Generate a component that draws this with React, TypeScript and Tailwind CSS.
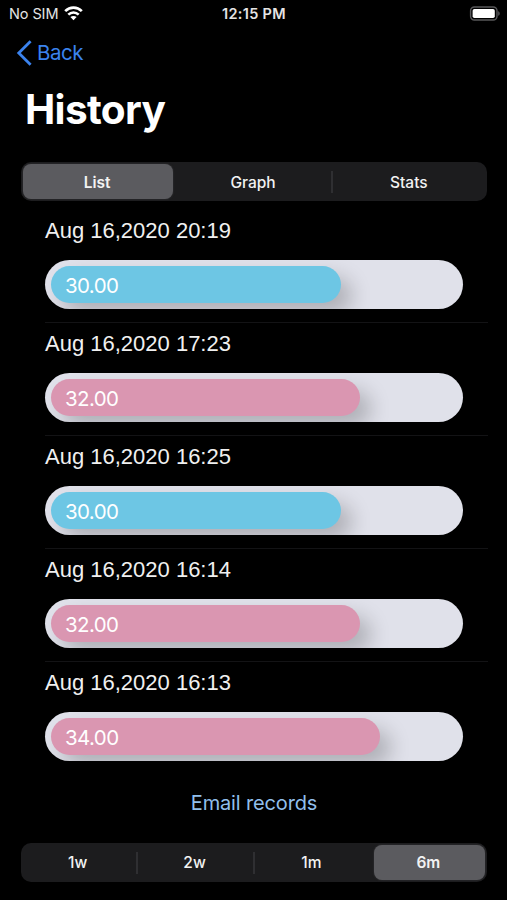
import React, { useState } from 'react';
import clsx from 'clsx';

interface HistoryRecord {
  id: number;
  date: string;
  value: number;
}

const records: HistoryRecord[] = [
  { id: 1, date: 'Aug 16,2020 20:19', value: 30 },
  { id: 2, date: 'Aug 16,2020 17:23', value: 32 },
  { id: 3, date: 'Aug 16,2020 16:25', value: 30 },
  { id: 4, date: 'Aug 16,2020 16:14', value: 32 },
  { id: 5, date: 'Aug 16,2020 16:13', value: 34 },
];

// Bar length in px for one unit of value
const UNIT_WIDTH = 9.67;

const StatusBar: React.FC = () => (
  <div className="grid h-7 grid-cols-3 items-center pl-[9px] pr-[7px] text-[14.5px] text-[#e4e4e4]">
    <div className="flex items-center gap-[6px] pb-[1px]">
      <span className="tracking-[-0.1px]">No SIM</span>
      <svg className="mt-[-1px] h-[15px] w-[19px]" viewBox="0 0 19 15" fill="none" stroke="#fff">
        <path d="M1.2 5.1C5.9 0.4 13.1 0.4 17.8 5.1" strokeWidth="2.7" />
        <path d="M4.3 8.6C7.3 5.7 11.7 5.7 14.7 8.6" strokeWidth="2.6" />
        <path d="M9.5 14.2L6.4 11.1C8.3 9.6 10.7 9.6 12.6 11.1Z" fill="#fff" stroke="none" />
      </svg>
    </div>
    <span className="pb-[1px] pr-[1px] text-center font-semibold tracking-[0.3px]">12:15 PM</span>
    <svg className="mt-[-1px] h-[15px] w-[31px] justify-self-end" viewBox="0 0 31 15">
      <rect x="1.6" y="1" width="26.4" height="13" rx="3.8" fill="none" stroke="#58585a" strokeWidth="1.4" />
      <rect x="3.6" y="3" width="22.2" height="9" rx="1.8" fill="#fff" />
      <path d="M29.2 5.2C31.2 5.9 31.2 9.1 29.2 9.8Z" fill="#58585a" />
    </svg>
  </div>
);

interface SegmentedControlProps {
  items: string[];
  selected: string;
  onSelect: (item: string) => void;
}

const SegmentedControl: React.FC<SegmentedControlProps> = ({ items, selected, onSelect }) => {
  const selectedIndex = items.indexOf(selected);

  return (
    <div className="flex h-[39px] rounded-[10px] bg-[#1c1c1e] p-[2px]">
      {items.map((item, index) => (
        <React.Fragment key={item}>
          {index > 0 && (
            <div
              className={clsx(
                'ml-[2px] mr-[1.5px] h-[22px] w-[2px] self-center',
                index === selectedIndex || index - 1 === selectedIndex ? 'bg-transparent' : 'bg-[#2f2f32]'
              )}
            />
          )}
          <button
            onClick={() => onSelect(item)}
            className={clsx(
              'min-w-0 flex-1 basis-0 rounded-[8px] pr-[2px] text-[15.5px] text-[#f2f2f2]',
              items.length === 3 ? 'pt-[2px]' : 'pt-[1px]',
              item === selected ? 'bg-[#5b5b5f] font-semibold shadow-[0_0_2px_#3a3a3d]' : 'font-medium'
            )}
          >
            {item}
          </button>
        </React.Fragment>
      ))}
    </div>
  );
};

const RecordRow: React.FC<{ record: HistoryRecord; last: boolean }> = ({ record, last }) => (
  <li
    className={clsx(
      'h-[113px] border-b pr-[25px] pt-[4px]',
      last ? 'border-transparent' : 'border-[#131315]'
    )}
  >
    <div className="h-[46px] whitespace-nowrap font-['Liberation_Sans',Arial,sans-serif] text-[22px] leading-[33px] text-[#f0f0f0]">
      {record.date}
    </div>
    <div className="h-[49px] overflow-hidden rounded-full bg-[#e0e1ea] p-[6px]">
      <div
        className={clsx(
          'flex h-[37px] items-center rounded-full pl-[14px] pt-[3px] text-[20.5px] tracking-[-0.6px] text-white shadow-[11px_11px_20px_rgba(0,0,0,0.22)]',
          record.value > 30 ? 'bg-[#da96b1]' : 'bg-[#6dc6e4]'
        )}
        style={{ width: record.value * UNIT_WIDTH }}
      >
        {record.value.toFixed(2)}
      </div>
    </div>
  </li>
);

export default function App() {
  const [tab, setTab] = useState('List');
  const [range, setRange] = useState('6m');

  return (
    <div className="h-[900px] w-[507px] overflow-hidden bg-black font-[Inter,sans-serif] text-white">
      <StatusBar />

      <header>
        <button className="flex h-[49px] items-center gap-[5px] pl-[16px] text-[20.5px] tracking-[-0.5px] text-[#3b83ee]">
          <svg className="h-[26px] w-[16px]" viewBox="0 0 16 26" fill="none" stroke="currentColor" strokeWidth="2.8">
            <path d="M14.6 1.3L2.8 13L14.6 24.7" />
          </svg>
          <span className="pt-[1px]">Back</span>
        </button>
        <h1 className="h-[85px] pl-[25px] pt-[8px] text-[40.5px] font-bold leading-[50px] tracking-[-0.65px]">
          History
        </h1>
      </header>

      <div className="pl-[21px] pr-[20px]">
        <SegmentedControl items={['List', 'Graph', 'Stats']} selected={tab} onSelect={setTab} />
      </div>

      <ul className="mt-[9px] pl-[45px] pr-[19px]">
        {records.map((record, index) => (
          <RecordRow key={record.id} record={record} last={index === records.length - 1} />
        ))}
      </ul>

      <button className="block h-[56px] w-full pl-[1px] text-[20px] tracking-[-0.15px] text-[#91bfec]">
        Email records
      </button>

      <div className="mt-[12px] pl-[21px] pr-[20px]">
        <SegmentedControl items={['1w', '2w', '1m', '6m']} selected={range} onSelect={setRange} />
      </div>
    </div>
  );
}
